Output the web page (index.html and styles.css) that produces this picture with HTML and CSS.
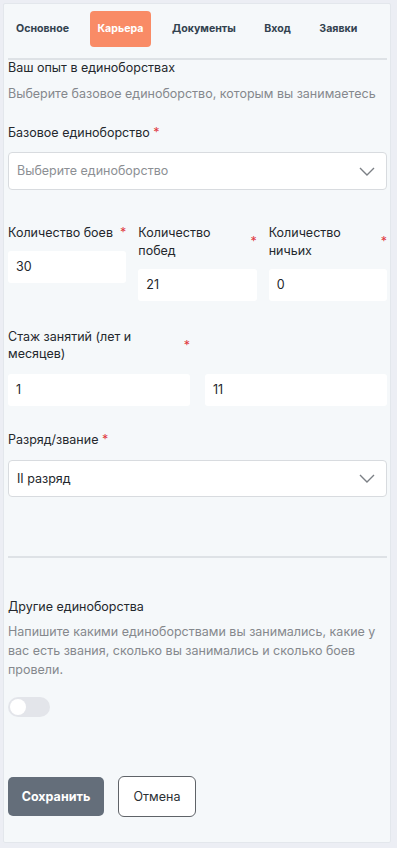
FILE: index.html
```html
<!DOCTYPE html>
<html lang="ru">
<head>
<meta charset="utf-8">
<link rel="stylesheet" href="styles.css">
</head>
<body>
<div class="card">
  <nav class="tabs">
    <span class="tab">Основное</span>
    <span class="tab active">Карьера</span>
    <span class="tab">Документы</span>
    <span class="tab">Вход</span>
    <span class="tab">Заявки</span>
  </nav>
  <div class="rule top-rule"></div>

  <h2 class="section-title">Ваш опыт в единоборствах</h2>
  <p class="hint">Выберите базовое единоборство, которым вы занимаетесь</p>

  <div class="field f-base">
    <label class="label"><span>Базовое единоборство <i class="req">*</i></span></label>
    <div class="select">
      <span class="placeholder">Выберите единоборство</span>
      <svg class="chev" width="16" height="9" viewBox="0 0 16 9"><path d="M1 1l7 7 7-7" fill="none" stroke="#7b7f85" stroke-width="1.4"/></svg>
    </div>
  </div>

  <div class="grid3">
    <div class="col">
      <label class="label"><span>Количество боев</span><i class="req">*</i></label>
      <div class="input">30</div>
    </div>
    <div class="col">
      <label class="label"><span>Количество побед</span><i class="req">*</i></label>
      <div class="input">21</div>
    </div>
    <div class="col">
      <label class="label"><span>Количество ничьих</span><i class="req">*</i></label>
      <div class="input">0</div>
    </div>
  </div>

  <div class="grid2 f-exp">
    <label class="label"><span>Стаж занятий (лет и месяцев)</span><i class="req">*</i></label>
    <div></div>
    <div class="input">1</div>
    <div class="input">11</div>
  </div>

  <div class="field f-rank">
    <label class="label"><span>Разряд/звание <i class="req">*</i></span></label>
    <div class="select">
      <span class="value">II разряд</span>
      <svg class="chev" width="16" height="9" viewBox="0 0 16 9"><path d="M1 1l7 7 7-7" fill="none" stroke="#7b7f85" stroke-width="1.4"/></svg>
    </div>
  </div>

  <div class="rule mid-rule"></div>

  <h2 class="section-title other">Другие единоборства</h2>
  <p class="hint multi">Напишите какими единоборствами вы занимались, какие у вас есть звания, сколько вы занимались и сколько боев провели.</p>

  <div class="toggle"><span class="knob"></span></div>

  <div class="actions">
    <button class="btn primary">Сохранить</button>
    <button class="btn ghost">Отмена</button>
  </div>
</div>
</body>
</html>
```

FILE: styles.css
```css
* { box-sizing: border-box; }
html, body { margin: 0; padding: 0; }
body {
  background: #eceef4;
  font-family: Inter, "Noto Sans", sans-serif;
  font-size: 12.5px;
  line-height: 18px;
  color: #23272c;
  padding: 3px 6px 5px 3px;
}
.card {
  background: #f5f8fa;
  border: 1px solid #e3e7ec;
  border-radius: 2px;
  padding: 7px 3px 25px 4px;
}
.tabs {
  display: flex;
  gap: 12.5px;
}
.tab {
  height: 36px;
  padding: 0 8px;
  display: flex;
  align-items: center;
  font-size: 10.6px;
  font-weight: 700;
  color: #33424f;
  border-radius: 4px;
}
.tab.active {
  background: #f98b66;
  color: #ffffff;
}
.rule {
  height: 2px;
  background: #dee2e6;
}
.top-rule { margin-top: 11px; }
.section-title {
  margin: 0;
  font-size: 12.5px;
  font-weight: 400;
  line-height: 16px;
  color: #24282d;
}
.hint {
  margin: 8px 0 0;
  line-height: 19px;
  color: #85888d;
}
.label {
  display: flex;
  justify-content: space-between;
  align-items: center;
  gap: 4px;
  color: #24282d;
}
.req {
  font-style: normal;
  color: #e0393e;
}
.f-base { margin-top: 21px; }
.f-base .label { margin-bottom: 10px; }
.select {
  height: 38px;
  background: #fff;
  border: 1px solid #d8dbdf;
  border-radius: 4px;
  display: flex;
  align-items: center;
  justify-content: space-between;
  padding: 0 11px 0 8px;
}
.placeholder { color: #8c8f94; }
.value { color: #23272c; }
.grid3 {
  margin-top: 34px;
  display: grid;
  grid-template-columns: 1fr 1fr 1fr;
  column-gap: 12px;
  align-items: start;
}
.col .label { margin-bottom: 9px; }
.input {
  height: 32px;
  background: #fff;
  border-radius: 3px;
  display: flex;
  align-items: center;
  padding: 0 8px;
  color: #23272c;
}
.grid2 {
  margin-top: 27px;
  display: grid;
  grid-template-columns: 1fr 1fr;
  column-gap: 15px;
  row-gap: 12px;
}
.grid2 .label { line-height: 17px; }
.f-rank { margin-top: 25px; }
.f-rank .label { margin-bottom: 11px; }
.f-rank .select { height: 37px; }
.mid-rule { margin-top: 59px; }
.section-title.other {
  margin-top: 40px;
  line-height: 18px;
}
.hint.multi { margin-top: 6px; }
.toggle {
  margin-top: 18px;
  width: 42px;
  height: 20px;
  border-radius: 10px;
  background: #e3e5ea;
  position: relative;
}
.knob {
  position: absolute;
  left: 2px;
  top: 2px;
  width: 16px;
  height: 16px;
  border-radius: 50%;
  background: #fff;
}
.actions {
  margin-top: 59px;
  display: flex;
  align-items: center;
  gap: 14px;
}
.btn {
  font-family: Inter, "Noto Sans", sans-serif;
  font-size: 12.5px;
  cursor: pointer;
}
.btn.primary {
  width: 96px;
  height: 39px;
  background: #646e7a;
  color: #fff;
  font-weight: 700;
  border: none;
  border-radius: 5px;
}
.btn.ghost {
  width: 78px;
  height: 41px;
  background: #fff;
  color: #2b2f33;
  border: 1px solid #5f6368;
  border-radius: 6px;
}
```
